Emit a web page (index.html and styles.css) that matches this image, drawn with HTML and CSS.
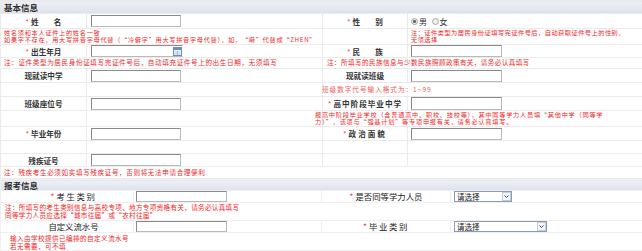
FILE: index.html
```html
<!DOCTYPE html>
<html lang="zh-CN">
<head>
  <meta charset="utf-8">
  <title>报名信息</title>
  <link rel="stylesheet" href="styles.css">
</head>
<body>

  <table class="form">
    <colgroup>
      <col class="w-l1"><col class="w-v1"><col class="w-l2"><col class="w-v2">
    </colgroup>
    <tr class="h13">
      <td colspan="4" class="head">基本信息</td>
    </tr>
    <tr class="h15">
      <td class="lab"><i class="req">*</i>姓　　名</td>
      <td class="val"><input type="text" class="inp"></td>
      <td class="lab"><i class="req">*</i>性　　别</td>
      <td class="val val-r">
        <span class="radio on"></span><span class="rlab">男</span>
        <span class="radio"></span><span class="rlab">女</span>
      </td>
    </tr>
    <tr class="h16">
      <td colspan="2" class="note tight note-name">姓名须和本人证件上的姓名一致<br>如果字不存在，用大写拼音字母代替（“冷僻字”用大写拼音字母代替），如，“啭”代替成“ZHEN”</td>
      <td></td>
      <td class="note tight note-r">注：证件类型为居民身份证填写完证件号后，自动获取证件号上的性别，<br>无须选择</td>
    </tr>
    <tr class="h12">
      <td class="lab"><i class="req">*</i>出生年月</td>
      <td class="val">
        <span class="date">
          <input type="text" class="inp inp-date">
          <svg class="cal" width="9" height="9" viewBox="0 0 9 9">
            <rect x="0.5" y="0.5" width="8" height="8" fill="#eaf0f9" stroke="#6d8cc0"/>
            <rect x="1" y="1" width="7" height="2" fill="#6d8cc0"/>
            <path d="M2 5h5M2 7h5M4.5 4v4" stroke="#a4b8da" stroke-width="0.7"/>
          </svg>
        </span>
      </td>
      <td class="lab"><i class="req">*</i>民　　族</td>
      <td class="val val-r"><input type="text" class="inp inp-r"></td>
    </tr>
    <tr class="h11">
      <td colspan="2" class="note">注：证件类型为居民身份证填写完证件号后，自动填充证件号上的出生日期，无须填写</td>
      <td colspan="2" class="note note-mid">注：所填写的民族信息与少数民族照顾政策有关，请务必认真填写</td>
    </tr>
    <tr class="h14">
      <td class="lab">现就读中学</td>
      <td class="val"><input type="text" class="inp"></td>
      <td class="lab">现就读班级</td>
      <td class="val val-r"><input type="text" class="inp inp-r"></td>
    </tr>
    <tr class="h14">
      <td></td>
      <td></td>
      <td colspan="2" class="note note-pale spill"><span class="shift-s">班级数字代号输入格式为：1~99</span></td>
    </tr>
    <tr class="h13">
      <td class="lab">班级座位号</td>
      <td class="val"><input type="text" class="inp"></td>
      <td class="lab lab-wide"><i class="req">*</i>高中阶段毕业中学</td>
      <td class="val val-r"><input type="text" class="inp inp-r inp-tall"></td>
    </tr>
    <tr class="h16">
      <td></td>
      <td></td>
      <td colspan="2" class="note tight note-hs top spill"><div class="shift-l">报高中阶段毕业学校（含普通高中、职校、技校等），其中同等学力人员填“其他中学（同等学<br>力）”，该项与“强基计划”等专项申报有关，请务必认真填写。</div></td>
    </tr>
    <tr class="h14">
      <td class="lab"><i class="req">*</i>毕业年份</td>
      <td class="val"><input type="text" class="inp"></td>
      <td class="lab lab-spaced"><i class="req">*</i>政治面貌</td>
      <td class="val val-r"><input type="text" class="inp inp-r"></td>
    </tr>
    <tr class="h13">
      <td></td><td></td><td></td><td></td>
    </tr>
    <tr class="h13">
      <td class="lab">残疾证号</td>
      <td class="val"><input type="text" class="inp"></td>
      <td></td>
      <td></td>
    </tr>
    <tr class="h12">
      <td colspan="4" class="note">注：残疾考生必须如实填写残疾证号，否则将无法申请合理便利</td>
    </tr>
  </table>

  <table class="form form-b">
    <colgroup>
      <col class="w-b1"><col class="w-b2"><col class="w-b3"><col class="w-b4">
    </colgroup>
    <tr class="h11">
      <td colspan="4" class="head">报考信息</td>
    </tr>
    <tr class="h12">
      <td class="lab lab-b lab-b1 spaced"><i class="req">*</i>考生类别</td>
      <td class="val val-b"><input type="text" class="inp inp-b"></td>
      <td class="lab lab-b"><i class="req">*</i>是否同等学力人员</td>
      <td class="val val-r">
        <span class="sel sel-s">请选择<span class="arr"><svg width="5" height="3" viewBox="0 0 5 3"><path d="M0.5 0.5L2.5 2.5L4.5 0.5" fill="none" stroke="#3e4f70"/></svg></span></span>
      </td>
    </tr>
    <tr class="h18">
      <td colspan="4" class="note loose">注：所填写的考生类别信息与高校专项、地方专项资格有关，请务必认真填写<br>同等学力人员应选择“城市往届”或“农村往届”</td>
    </tr>
    <tr class="h12">
      <td class="lab lab-b lab-b1">自定义流水号</td>
      <td class="val val-b"><input type="text" class="inp inp-b"></td>
      <td class="lab lab-b spaced"><i class="req">*</i>毕业类别</td>
      <td class="val val-r">
        <span class="sel sel-l">请选择<span class="arr"><svg width="5" height="3" viewBox="0 0 5 3"><path d="M0.5 0.5L2.5 2.5L4.5 0.5" fill="none" stroke="#3e4f70"/></svg></span></span>
      </td>
    </tr>
    <tr class="h18">
      <td colspan="4" class="note looser note-in">输入由学校提供已编排的自定义流水号<br>若无需要，可不填</td>
    </tr>
  </table>

</body>
</html>
```

FILE: styles.css
```css
body {
  margin: 0;
  background: #fff;
  color: #333;
  font-family: "Noto Sans CJK SC", "Noto Sans", sans-serif;
}

.form {
  width: 642px;
  table-layout: fixed;
  border-collapse: collapse;
}

.form td {
  padding: 0;
  border: 1px solid #ebebeb;
  vertical-align: middle;
  white-space: nowrap;
  overflow: hidden;
  font-size: 7px;
  line-height: 8px;
}

.form-b td {
  border-color: #efefef;
}

/* column widths */
.w-l1 { width: 86px; }
.w-v1 { width: 236px; }
.w-l2 { width: 85px; }
.w-v2 { width: 235px; }

.w-b1 { width: 133px; }
.w-b2 { width: 188px; }
.w-b3 { width: 129px; }
.w-b4 { width: 192px; }

/* row heights */
.h11 { height: 11px; }
.h12 { height: 12px; }
.h13 { height: 13px; }
.h14 { height: 14px; }
.h15 { height: 15px; }
.h16 { height: 16px; }
.h18 { height: 18px; }

.form .head {
  background: linear-gradient(#eef0f5, #dde1ea);
  font-size: 8.5px;
  font-weight: bold;
  line-height: 10px;
  padding-left: 3px;
  color: #2e2e2e;
}

.form .lab {
  text-align: center;
  font-size: 7.6px;
  font-weight: bold;
  line-height: 9px;
  color: #333;
}

.lab-wide { letter-spacing: 1px; }
.lab-spaced { letter-spacing: 2px; }

.form .lab-b {
  font-size: 8.4px;
  font-weight: normal;
  color: #222;
}
.form .lab-b1 { padding-left: 13px; }
.spaced { letter-spacing: 1.6px; }

.req {
  color: #f0404a;
  font-style: normal;
  font-weight: normal;
  margin-right: 2px;
  letter-spacing: 0;
}

.form .val { padding-left: 4px; }
.form .val-r { padding-left: 3px; }
.form .val-b { padding-left: 2px; }

.inp {
  display: inline-block;
  vertical-align: middle;
  width: 90px;
  height: 12px;
  margin: 0;
  padding: 0;
  box-sizing: border-box;
  border: 1px solid #b9b9b9;
  border-top-color: #8a8a8a;
  border-left-color: #8a8a8a;
  background: #fff;
  font-size: 7px;
}
.inp-r { width: 91px; }
.inp-b { width: 91px; height: 11px; }
.inp-tall { height: 13px; }

.date {
  display: inline-block;
  position: relative;
  vertical-align: middle;
  height: 12px;
}
.inp-date {
  width: 92px;
  border-right-color: #fff;
}
.cal {
  position: absolute;
  right: 1px;
  top: 1.5px;
}

.form .note {
  color: #f01e1e;
  font-size: 6.6px;
  line-height: 7.5px;
  letter-spacing: 0.6px;
  padding-left: 3px;
  text-align: left;
}
.form .tight {
  font-size: 6.2px;
  line-height: 6.8px;
  letter-spacing: 1px;
}
.form .note-name { letter-spacing: 0.7px; }
.form .note-hs { letter-spacing: 0.75px; }
.form .top {
  vertical-align: top;
  padding-top: 1px;
}
.form .spill { overflow: visible; }
.form .loose { line-height: 7.6px; padding-left: 4px; letter-spacing: 0.3px; }
.form .looser { line-height: 8px; letter-spacing: 0.4px; }
.form .note-in { padding-left: 9px; }
.form .note-r { letter-spacing: 0.5px; padding-left: 3px; }
.form .note-mid { padding-left: 4px; letter-spacing: 0.4px; }
.form .note-pale { color: #f25a5a; letter-spacing: 1px; }

.shift-s { margin-left: -4px; }
.shift-l { margin-left: -11px; }

.radio {
  display: inline-block;
  vertical-align: middle;
  width: 7px;
  height: 7px;
  box-sizing: border-box;
  border: 1px solid #a8a8a8;
  border-radius: 50%;
  background: #eeeeee;
}
.radio.on {
  background: radial-gradient(circle, #6c6c6c 0 1.3px, #eeeeee 1.8px);
}
.rlab {
  font-size: 8px;
  vertical-align: middle;
  margin-left: 1px;
  margin-right: 3px;
  color: #333;
}

.sel {
  display: inline-flex;
  align-items: center;
  justify-content: space-between;
  vertical-align: middle;
  height: 11px;
  box-sizing: border-box;
  border: 1px solid #8c9bb4;
  background: #fff;
  font-size: 7.5px;
  line-height: 9px;
  color: #111;
  padding-left: 2px;
}
.sel-s { width: 58px; }
.sel-l { width: 93px; }

.arr {
  display: flex;
  align-items: center;
  justify-content: center;
  width: 9px;
  height: 9px;
  box-sizing: border-box;
  border: 1px solid #c3ccdb;
  background: #f4f6fa;
}
```
